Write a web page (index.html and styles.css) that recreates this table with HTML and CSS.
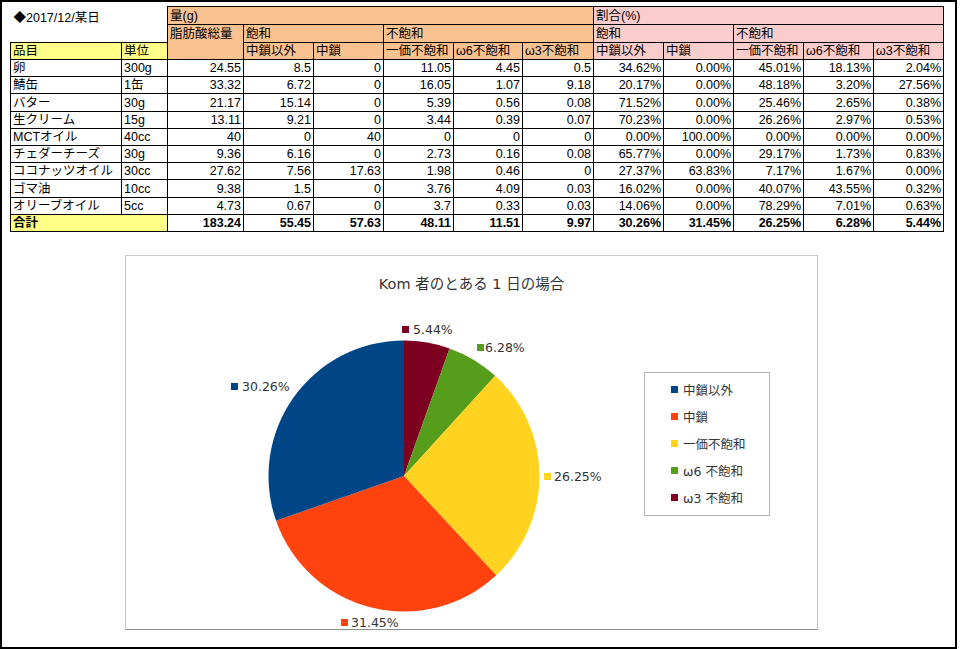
FILE: index.html
```html
<!DOCTYPE html>
<html lang="ja">
<head>
<meta charset="utf-8">
<title>脂肪酸 2017/12/某日</title>
<link rel="stylesheet" href="styles.css">
</head>
<body>
<div class="frame">
  <table class="sheet">
    <colgroup>
      <col class="w111"><col class="w46"><col class="w76"><col class="w70"><col class="w70"><col class="w70"><col class="w69"><col class="w71"><col class="w70"><col class="w70"><col class="w70"><col class="w70"><col class="w70">
    </colgroup>
    <tr class="h18">
      <td class="blank date" colspan="2" rowspan="2">◆2017/12/某日</td>
      <td class="org" colspan="6">量(g)</td>
      <td class="pnk" colspan="5">割合(%)</td>
    </tr>
    <tr class="h18">
      <td class="org top" rowspan="2">脂肪酸総量</td>
      <td class="org" colspan="2">飽和</td>
      <td class="org" colspan="3">不飽和</td>
      <td class="pnk" colspan="2">飽和</td>
      <td class="pnk" colspan="3">不飽和</td>
    </tr>
    <tr class="h17">
      <td class="yel">品目</td>
      <td class="yel">単位</td>
      <td class="org">中鎖以外</td>
      <td class="org">中鎖</td>
      <td class="org">一価不飽和</td>
      <td class="org">ω6不飽和</td>
      <td class="org">ω3不飽和</td>
      <td class="pnk">中鎖以外</td>
      <td class="pnk">中鎖</td>
      <td class="pnk">一価不飽和</td>
      <td class="pnk">ω6不飽和</td>
      <td class="pnk">ω3不飽和</td>
    </tr>
    <tr class="row"><td>卵</td><td>300g</td><td class="num">24.55</td><td class="num">8.5</td><td class="num">0</td><td class="num">11.05</td><td class="num">4.45</td><td class="num">0.5</td><td class="num">34.62%</td><td class="num">0.00%</td><td class="num">45.01%</td><td class="num">18.13%</td><td class="num">2.04%</td></tr>
    <tr class="row"><td>鯖缶</td><td>1缶</td><td class="num">33.32</td><td class="num">6.72</td><td class="num">0</td><td class="num">16.05</td><td class="num">1.07</td><td class="num">9.18</td><td class="num">20.17%</td><td class="num">0.00%</td><td class="num">48.18%</td><td class="num">3.20%</td><td class="num">27.56%</td></tr>
    <tr class="row"><td>バター</td><td>30g</td><td class="num">21.17</td><td class="num">15.14</td><td class="num">0</td><td class="num">5.39</td><td class="num">0.56</td><td class="num">0.08</td><td class="num">71.52%</td><td class="num">0.00%</td><td class="num">25.46%</td><td class="num">2.65%</td><td class="num">0.38%</td></tr>
    <tr class="row"><td>生クリーム</td><td>15g</td><td class="num">13.11</td><td class="num">9.21</td><td class="num">0</td><td class="num">3.44</td><td class="num">0.39</td><td class="num">0.07</td><td class="num">70.23%</td><td class="num">0.00%</td><td class="num">26.26%</td><td class="num">2.97%</td><td class="num">0.53%</td></tr>
    <tr class="row"><td>MCTオイル</td><td>40cc</td><td class="num">40</td><td class="num">0</td><td class="num">40</td><td class="num">0</td><td class="num">0</td><td class="num">0</td><td class="num">0.00%</td><td class="num">100.00%</td><td class="num">0.00%</td><td class="num">0.00%</td><td class="num">0.00%</td></tr>
    <tr class="row"><td>チェダーチーズ</td><td>30g</td><td class="num">9.36</td><td class="num">6.16</td><td class="num">0</td><td class="num">2.73</td><td class="num">0.16</td><td class="num">0.08</td><td class="num">65.77%</td><td class="num">0.00%</td><td class="num">29.17%</td><td class="num">1.73%</td><td class="num">0.83%</td></tr>
    <tr class="row"><td>ココナッツオイル</td><td>30cc</td><td class="num">27.62</td><td class="num">7.56</td><td class="num">17.63</td><td class="num">1.98</td><td class="num">0.46</td><td class="num">0</td><td class="num">27.37%</td><td class="num">63.83%</td><td class="num">7.17%</td><td class="num">1.67%</td><td class="num">0.00%</td></tr>
    <tr class="row"><td>ゴマ油</td><td>10cc</td><td class="num">9.38</td><td class="num">1.5</td><td class="num">0</td><td class="num">3.76</td><td class="num">4.09</td><td class="num">0.03</td><td class="num">16.02%</td><td class="num">0.00%</td><td class="num">40.07%</td><td class="num">43.55%</td><td class="num">0.32%</td></tr>
    <tr class="row"><td>オリーブオイル</td><td>5cc</td><td class="num">4.73</td><td class="num">0.67</td><td class="num">0</td><td class="num">3.7</td><td class="num">0.33</td><td class="num">0.03</td><td class="num">14.06%</td><td class="num">0.00%</td><td class="num">78.29%</td><td class="num">7.01%</td><td class="num">0.63%</td></tr>
    <tr class="row total"><td class="yel" colspan="2">合計</td><td class="num">183.24</td><td class="num">55.45</td><td class="num">57.63</td><td class="num">48.11</td><td class="num">11.51</td><td class="num">9.97</td><td class="num">30.26%</td><td class="num">31.45%</td><td class="num">26.25%</td><td class="num">6.28%</td><td class="num">5.44%</td></tr>
  </table>

  <div class="chart">
    <div class="chart-title">Kom 者のとある 1 日の場合</div>
    <div class="chart-body">
      <svg class="pie" viewBox="0 0 510 336" width="510" height="336">
        <path class="p-red" d="M278,183 L278,47.5 A135.5,135.5 0 0 1 323.56,55.39 Z"/>
        <path class="p-green" d="M278,183 L323.56,55.39 A135.5,135.5 0 0 1 369.25,82.83 Z"/>
        <path class="p-yellow" d="M278,183 L369.25,82.83 A135.5,135.5 0 0 1 370.17,282.32 Z"/>
        <path class="p-orange" d="M278,183 L370.17,282.32 A135.5,135.5 0 0 1 150.10,227.74 Z"/>
        <path class="p-blue" d="M278,183 L150.10,227.74 A135.5,135.5 0 0 1 278,47.5 Z"/>
        <rect class="p-red" x="276" y="33" width="7" height="7"/>
        <text class="lbl" x="287" y="41">5.44%</text>
        <rect class="p-green" x="351" y="51" width="7" height="7"/>
        <text class="lbl" x="359" y="59">6.28%</text>
        <rect class="p-blue" x="105" y="90" width="7" height="7"/>
        <text class="lbl" x="116" y="98">30.26%</text>
        <rect class="p-yellow" x="418" y="180" width="7" height="7"/>
        <text class="lbl" x="428" y="188">26.25%</text>
        <rect class="p-orange" x="215" y="326" width="7" height="7"/>
        <text class="lbl" x="225" y="334">31.45%</text>
      </svg>
      <ul class="legend">
        <li><span class="swatch s-blue"></span>中鎖以外</li>
        <li><span class="swatch s-orange"></span>中鎖</li>
        <li><span class="swatch s-yellow"></span>一価不飽和</li>
        <li><span class="swatch s-green"></span>ω6 不飽和</li>
        <li><span class="swatch s-red"></span>ω3 不飽和</li>
      </ul>
    </div>
  </div>
</div>
</body>
</html>
```
FILE: styles.css
```css
* { box-sizing: border-box; }

body {
  margin: 0;
  background: #fff;
}

.frame {
  width: 957px;
  height: 649px;
  border: 2px solid #000;
  padding: 4px 0 0 8px;
  overflow: hidden;
}

/* spreadsheet */
.sheet {
  border-collapse: collapse;
  table-layout: fixed;
  width: 934px;
  font-family: "Liberation Sans", "Noto Sans CJK JP", sans-serif;
  font-size: 12.5px;
  color: #000;
}

.w111 { width: 111px; }
.w46 { width: 46px; }
.w76 { width: 76px; }
.w70 { width: 70px; }
.w69 { width: 69px; }
.w71 { width: 71px; }

.sheet td {
  border: 1px solid #000;
  padding: 0 2px;
  line-height: 15px;
  vertical-align: bottom;
  white-space: nowrap;
  overflow: hidden;
}

.sheet td.blank { border: none; }
.sheet td.date { vertical-align: top; padding: 4px 0 0 3px; }
.sheet td.top { vertical-align: top; padding-top: 2px; }

.h18 { height: 18px; }
.h17 { height: 17px; }
.row { height: 17.2px; }

.num { text-align: right; }
.org { background: #fac291; }
.pnk { background: #facdcd; }
.yel { background: #ffff88; }
.total td { font-weight: bold; }

/* chart */
.chart {
  width: 693px;
  height: 375px;
  margin: 23px 0 0 115px;
  border: 1px solid;
  border-color: #c8c8c8 #c8c8c8 #8c8c8c #c8c8c8;
  display: flex;
  flex-direction: column;
  font-family: "DejaVu Sans", "Noto Sans CJK JP", sans-serif;
  color: #333;
}

.chart-title {
  margin-top: 19px;
  height: 18px;
  line-height: 18px;
  text-align: center;
  font-size: 14.5px;
}

.chart-body {
  display: flex;
  align-items: flex-start;
}

.pie {
  flex: none;
  overflow: visible;
}

.lbl {
  font-family: "DejaVu Sans", sans-serif;
  font-size: 12.5px;
  fill: #333;
}

.p-blue { fill: #004586; }
.p-orange { fill: #ff420e; }
.p-yellow { fill: #ffd320; }
.p-green { fill: #579d1c; }
.p-red { fill: #7e0021; }

.legend {
  margin: 79px 0 0 8px;
  width: 126px;
  border: 1px solid #b3b3b3;
  padding: 3px 0 4px 26px;
  list-style: none;
  font-size: 12.5px;
}

.legend li {
  display: flex;
  align-items: center;
  gap: 5px;
  height: 27px;
}

.swatch {
  width: 7px;
  height: 7px;
  flex: none;
}

.s-blue { background: #004586; }
.s-orange { background: #ff420e; }
.s-yellow { background: #ffd320; }
.s-green { background: #579d1c; }
.s-red { background: #7e0021; }
```
